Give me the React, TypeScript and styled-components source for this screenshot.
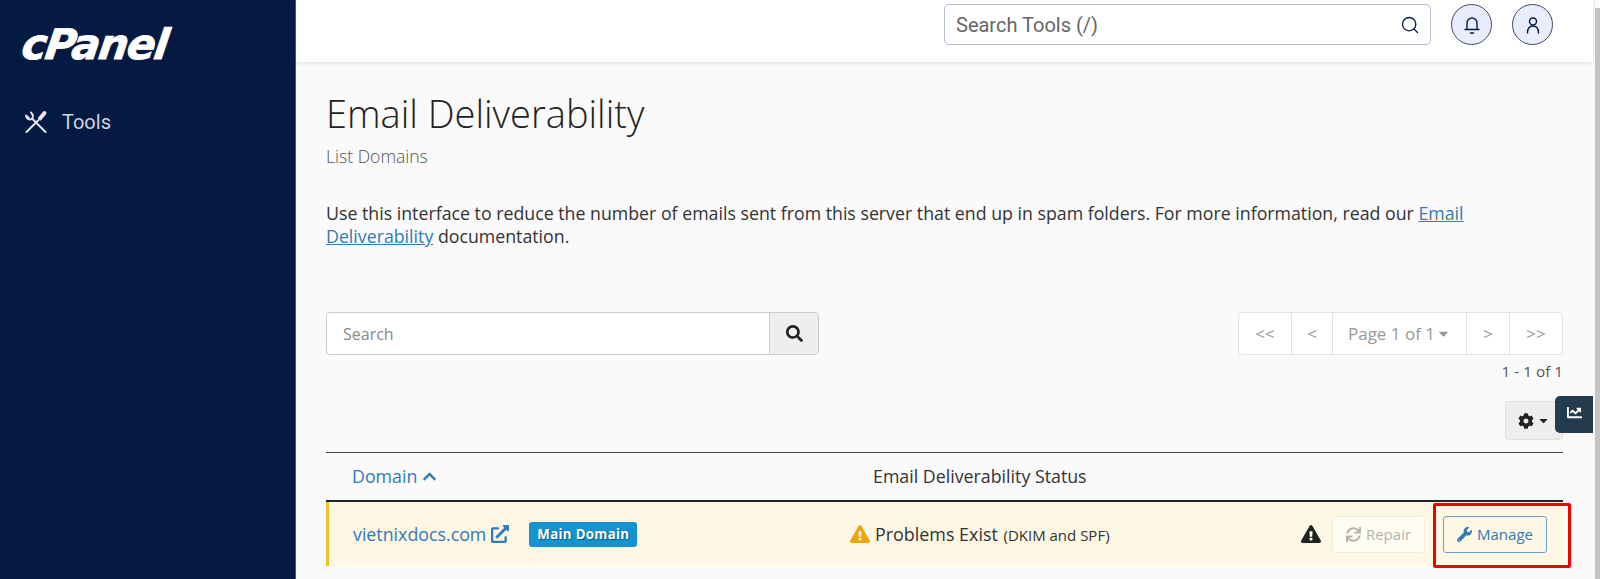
import React from "react"
import styled, { createGlobalStyle } from "styled-components"
import { Search as SearchGlyph } from "lucide-react"
import {
  FaCaretDown,
  FaChartLine,
  FaChevronUp,
  FaCog,
  FaExclamationTriangle,
  FaExternalLinkAlt,
  FaSearch,
  FaSync,
  FaWrench,
} from "react-icons/fa"

const GlobalStyle = createGlobalStyle`
  html, body {
    margin: 0;
    height: 100%;
    overflow: hidden;
  }
  * {
    box-sizing: border-box;
  }
`
const Shell = styled.div`
  display: flex;
  width: 1600px;
  height: 579px;
  overflow: hidden;
  background-color: #fafafa;
  font-family: "Open Sans", sans-serif;
  color: #333;
`
const Sidebar = styled.aside`
  width: 296px;
  flex-shrink: 0;
  background-color: #051a42;
  padding: 22px 22px 0;
  border-right: 1px solid #4a5470;
`
const Logo = styled.div`
  margin-left: -3px;
  font-family: "DejaVu Sans", sans-serif;
  font-size: 42px;
  line-height: 46px;
  font-weight: 700;
  font-style: italic;
  letter-spacing: -1.5px;
  color: white;
  -webkit-text-stroke: 0.8px white;
  transform: skewX(-8deg);
  transform-origin: left bottom;
`
const ToolsLink = styled.a`
  display: flex;
  align-items: center;
  gap: 14px;
  margin-top: 42px;
  padding-left: 2px;
  font-family: Roboto, sans-serif;
  font-size: 20px;
  color: #cfd4de;
`
const Main = styled.div`
  flex: 1;
  display: flex;
  flex-direction: column;
  min-width: 0;
`
const Topbar = styled.header`
  height: 62px;
  flex-shrink: 0;
  display: flex;
  justify-content: flex-end;
  align-items: flex-start;
  gap: 20px;
  margin-right: 2px;
  padding: 4px 40px 0 0;
  background-color: white;
  box-shadow: 0 1px 4px rgba(0, 0, 0, 0.12);
`
const ToolSearch = styled.div`
  width: 487px;
  height: 41px;
  display: flex;
  align-items: center;
  justify-content: space-between;
  padding: 0 10px 0 11px;
  border: 1px solid #b4bcd0;
  border-radius: 5px;
  font-family: Roboto, sans-serif;
  font-size: 20px;
  color: #666;
  background-color: white;
`
const RoundButton = styled.button`
  width: 41px;
  height: 41px;
  padding: 0;
  display: flex;
  align-items: center;
  justify-content: center;
  border: 1px solid #3d4a68;
  border-radius: 50%;
  background-color: #e9edfb;
  color: #051a42;
`
const Content = styled.main`
  flex: 1;
  padding: 29px 32px 0 30px;
`
const Title = styled.h1`
  margin: 0;
  font-size: 38px;
  line-height: 44px;
  font-weight: 300;
  color: #222;
`
const Subtitle = styled.div`
  margin-top: 10px;
  font-size: 17.6px;
  line-height: 22px;
  font-weight: 300;
  color: #555;
`
const Description = styled.p`
  margin: 35px 0 0;
  font-size: 17.76px;
  line-height: 23px;
  color: #333;
  a {
    color: #337ab7;
    text-decoration: underline;
  }
`
const ControlsRow = styled.div`
  display: flex;
  justify-content: space-between;
  align-items: flex-start;
  margin-top: 64px;
`
const SearchGroup = styled.div`
  width: 493px;
  height: 43px;
  display: flex;
  border: 1px solid #ccc;
  border-radius: 4px;
  background-color: white;
  overflow: hidden;
`
const SearchText = styled.div`
  flex: 1;
  display: flex;
  align-items: center;
  padding-left: 16px;
  font-size: 16px;
  color: #8a8a8a;
`
const SearchAddon = styled.div`
  width: 49px;
  display: flex;
  align-items: center;
  justify-content: center;
  border-left: 1px solid #ccc;
  background-color: #eee;
  color: #222;
  font-size: 17px;
`
const PagerColumn = styled.div`
  display: flex;
  flex-direction: column;
  align-items: flex-end;
`
const Pager = styled.div`
  height: 43px;
  display: flex;
  border: 1px solid #e3e3e3;
  border-radius: 4px;
  background-color: white;
`
const PagerCell = styled.div<{ $w: number }>`
  width: ${(p) => p.$w}px;
  display: flex;
  align-items: center;
  justify-content: center;
  gap: 1px;
  font-size: 17px;
  color: #999;
  & + & {
    border-left: 1px solid #e3e3e3;
  }
`
const PageCount = styled.div`
  margin-top: 6px;
  font-size: 15.3px;
  line-height: 20px;
  color: #555;
`
const GearRow = styled.div`
  display: flex;
  justify-content: flex-end;
  margin-top: 20px;
`
const GearButton = styled.button`
  width: 58px;
  height: 39px;
  display: flex;
  align-items: center;
  justify-content: center;
  gap: 3px;
  padding: 0;
  border: 1px solid #ddd;
  border-radius: 4px;
  background-color: #eee;
  color: #222;
  font-size: 16px;
`
const Table = styled.div`
  margin-top: 12px;
  border-top: 1px solid #444;
`
const HeaderRow = styled.div`
  height: 49px;
  display: flex;
  align-items: center;
  padding-bottom: 1px;
  font-size: 17.8px;
  border-bottom: 2px solid #222;
`
const DomainHead = styled.a`
  width: 547px;
  padding-left: 26px;
  display: flex;
  align-items: center;
  gap: 5px;
  color: #337ab7;
`
const StatusHead = styled.div`
  color: #333;
`
const Row = styled.div`
  position: relative;
  height: 64px;
  display: flex;
  align-items: center;
  background-color: #fdf7e3;
  border-left: 3px solid #f0c030;
`
const DomainCell = styled.div`
  width: 521px;
  padding-left: 24px;
  display: flex;
  align-items: center;
`
const DomainLink = styled.a`
  display: flex;
  align-items: center;
  gap: 5px;
  font-size: 17.8px;
  color: #337ab7;
`
const MainBadge = styled.span`
  margin-left: 20px;
  height: 25px;
  padding: 0 8px;
  display: flex;
  align-items: center;
  border-radius: 3px;
  background-color: #1393d0;
  color: white;
  font-size: 13.3px;
  font-weight: 700;
  letter-spacing: 0.3px;
  text-shadow: 1px 1px 1px rgba(0, 0, 0, 0.4);
`
const StatusCell = styled.div`
  flex: 1;
  display: flex;
  align-items: center;
  gap: 5px;
  font-size: 17.9px;
  color: #333;
  small {
    font-size: 15px;
    margin-left: 1px;
  }
`
const Actions = styled.div`
  display: flex;
  align-items: center;
  padding-right: 16px;
`
const ActionButton = styled.button<{ $disabled?: boolean }>`
  height: 37px;
  display: flex;
  align-items: center;
  justify-content: center;
  gap: 5px;
  padding: 0;
  border-radius: 3px;
  font-family: "Open Sans", sans-serif;
  font-size: 15px;
  background-color: ${(p) => (p.$disabled ? "#fefcf3" : "transparent")};
  border: 1px solid ${(p) => (p.$disabled ? "#f1eddd" : "#6f9fc8")};
  color: ${(p) => (p.$disabled ? "#b5b5ad" : "#337ab7")};
`
const RepairButton = styled(ActionButton)`
  width: 93px;
  margin: 0 18px 0 11px;
`
const ManageButton = styled(ActionButton)`
  width: 104px;
`
const Highlight = styled.div`
  position: absolute;
  top: 1px;
  right: -8px;
  width: 138px;
  height: 65px;
  border: 3px solid #f00000;
  border-radius: 2px;
  pointer-events: none;
`
const ChartTab = styled.div`
  position: absolute;
  left: 1555px;
  top: 396px;
  width: 38px;
  height: 37px;
  display: flex;
  align-items: center;
  justify-content: center;
  padding-bottom: 4px;
  border-radius: 5px 0 0 5px;
  background-color: #243a4e;
  color: white;
  font-size: 15px;
`
const Scrollbar = styled.div`
  width: 5px;
  flex-shrink: 0;
  margin-top: 8px;
  background-color: #c4c4c4;
`

export default function App() {
  return (
    <>
      <GlobalStyle />
      <Shell>
        <Sidebar>
          <Logo>cPanel</Logo>
          <ToolsLink>
            <svg width="24" height="24" viewBox="0 0 24 24" fill="none" stroke="#e4e7ee" strokeLinecap="round" strokeLinejoin="round">
              <path d="M21.5 22L8 8.5" strokeWidth="2" />
              <path d="M2 5.5c0 3 3 5 6 3.5 1.5-1.5 1-4.5-1-6.5M2 5.5L5 8M7 2.5L9 5" strokeWidth="1.8" />
              <path d="M2.5 22L14 10.5" strokeWidth="2" />
              <path d="M16 8.5l4.5-5.5" strokeWidth="4" />
            </svg>
            Tools
          </ToolsLink>
        </Sidebar>
        <Main>
          <Topbar>
            <ToolSearch>
              Search Tools (/)
              <SearchGlyph size={20} color="#051a42" strokeWidth={1.6} />
            </ToolSearch>
            <RoundButton>
              <svg width="20" height="20" viewBox="0 0 20 20" fill="none" stroke="currentColor" strokeWidth="1.4" strokeLinecap="round">
                <path d="M5 14V8a5 5 0 0 1 10 0v6" />
                <path d="M3 14.5h14" />
                <path d="M8.5 18h3" />
              </svg>
            </RoundButton>
            <RoundButton>
              <svg width="20" height="20" viewBox="0 0 20 20" fill="none" stroke="currentColor" strokeWidth="1.4" strokeLinecap="round">
                <circle cx="10" cy="6.5" r="3.5" />
                <path d="M4.5 18c0-5 2.5-7 5.5-7s5.5 2 5.5 7" />
              </svg>
            </RoundButton>
          </Topbar>
          <Content>
            <Title>Email Deliverability</Title>
            <Subtitle>List Domains</Subtitle>
            <Description>
              Use this interface to reduce the number of emails sent from this server that end up in spam folders. For more information, read our{" "}
              <a>Email Deliverability</a> documentation.
            </Description>
            <ControlsRow>
              <SearchGroup>
                <SearchText>Search</SearchText>
                <SearchAddon>
                  <FaSearch />
                </SearchAddon>
              </SearchGroup>
              <PagerColumn>
                <Pager>
                  <PagerCell $w={52}>&lt;&lt;</PagerCell>
                  <PagerCell $w={41}>&lt;</PagerCell>
                  <PagerCell $w={134}>
                    Page 1 of 1<FaCaretDown size={15} />
                  </PagerCell>
                  <PagerCell $w={43}>&gt;</PagerCell>
                  <PagerCell $w={53}>&gt;&gt;</PagerCell>
                </Pager>
                <PageCount>1 - 1 of 1</PageCount>
              </PagerColumn>
            </ControlsRow>
            <GearRow>
              <GearButton>
                <FaCog />
                <FaCaretDown size={13} />
              </GearButton>
            </GearRow>
            <Table>
              <HeaderRow>
                <DomainHead>
                  Domain <FaChevronUp size={15} />
                </DomainHead>
                <StatusHead>Email Deliverability Status</StatusHead>
              </HeaderRow>
              <Row>
                <DomainCell>
                  <DomainLink>
                    vietnixdocs.com
                    <FaExternalLinkAlt size={18} />
                  </DomainLink>
                  <MainBadge>Main Domain</MainBadge>
                </DomainCell>
                <StatusCell>
                  <FaExclamationTriangle size={20} color="#eea40f" />
                  <span>
                    Problems Exist <small>(DKIM and SPF)</small>
                  </span>
                </StatusCell>
                <Actions>
                  <FaExclamationTriangle size={20} color="#222" />
                  <RepairButton $disabled>
                    <FaSync size={15} /> Repair
                  </RepairButton>
                  <ManageButton>
                    <FaWrench size={15} /> Manage
                  </ManageButton>
                </Actions>
                <Highlight />
              </Row>
            </Table>
          </Content>
        </Main>
        <Scrollbar />
        <ChartTab>
          <FaChartLine />
        </ChartTab>
      </Shell>
    </>
  )
}
